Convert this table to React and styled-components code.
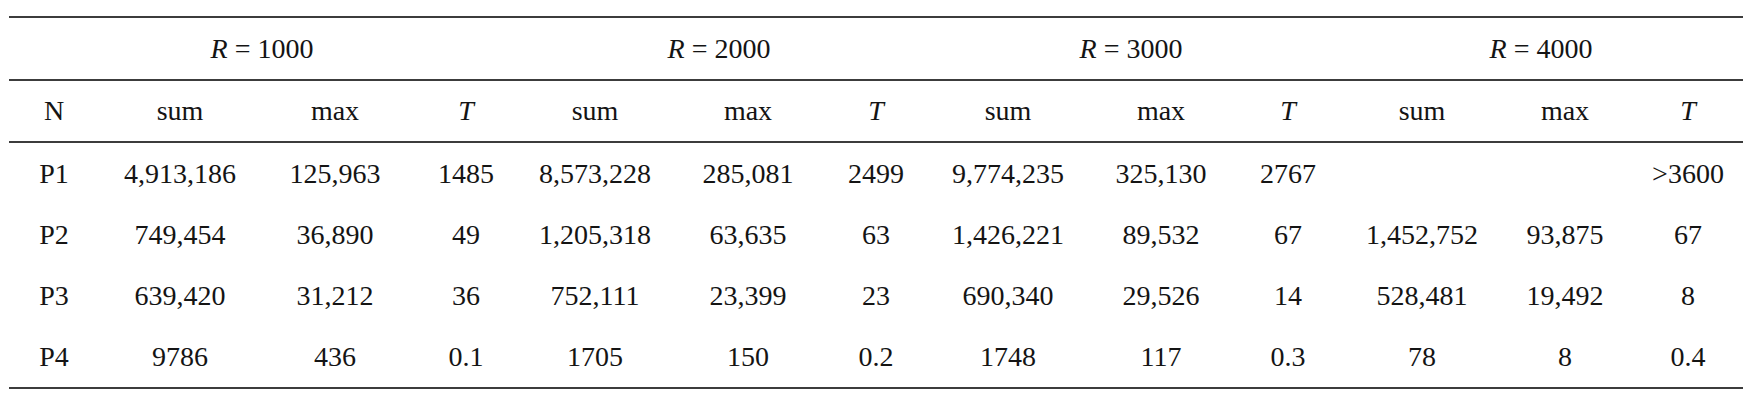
import React from "react";
import styled, { createGlobalStyle } from "styled-components";

const Global = createGlobalStyle`
  html, body { margin: 0; padding: 0; background: #ffffff; }
  body { font-family: "Liberation Serif", "Times New Roman", serif; color: #141414; }
`;

const COLS = "90px 162px 148px 114px 144px 162px 94px 170px 136px 118px 150px 136px 110px";

const Page = styled.div`
  padding: 16px 0 0 9px;
  width: 1734px;
`;

const Table = styled.div`
  border-top: 2px solid #3c3c3c;
  border-bottom: 2px solid #3c3c3c;
`;

const Row = styled.div`
  display: grid;
  grid-template-columns: ${COLS};
  height: ${(p) => p.$h}px;
  align-items: center;
  border-bottom: ${(p) => (p.$rule ? "2px solid #3c3c3c" : "none")};
`;

const Cell = styled.div`
  grid-column: ${(p) => p.$span || "auto"};
  display: flex;
  justify-content: center;
  font-size: 28px;
  line-height: 1;
  white-space: nowrap;
  padding-right: ${(p) => p.$shift || 0}px;
`;

const Var = styled.i`
  font-style: italic;
`;

const groups = [
  { v: "1000", span: "1 / 5" },
  { v: "2000", span: "5 / 8" },
  { v: "3000", span: "8 / 11" },
  { v: "4000", span: "11 / 14" },
];

const heads = ["N", "sum", "max", "T", "sum", "max", "T", "sum", "max", "T", "sum", "max", "T"];

const rows = [
  ["P1", "4,913,186", "125,963", "1485", "8,573,228", "285,081", "2499", "9,774,235", "325,130", "2767", "", "", ">3600"],
  ["P2", "749,454", "36,890", "49", "1,205,318", "63,635", "63", "1,426,221", "89,532", "67", "1,452,752", "93,875", "67"],
  ["P3", "639,420", "31,212", "36", "752,111", "23,399", "23", "690,340", "29,526", "14", "528,481", "19,492", "8"],
  ["P4", "9786", "436", "0.1", "1705", "150", "0.2", "1748", "117", "0.3", "78", "8", "0.4"],
];

export default function App() {
  return (
    <>
      <Global />
      <Page>
        <Table>
          <Row $h={61} $rule>
            {groups.map((g) => (
              <Cell key={g.v} $span={g.span} $shift={8}>
                <span>
                  <Var>R</Var> = {g.v}
                </span>
              </Cell>
            ))}
          </Row>
          <Row $h={60} $rule>
            {heads.map((h, i) => (
              <Cell key={i}>{h === "T" ? <Var>T</Var> : h}</Cell>
            ))}
          </Row>
          {rows.map((r) => (
            <Row key={r[0]} $h={61}>
              {r.map((c, i) => (
                <Cell key={i}>{c}</Cell>
              ))}
            </Row>
          ))}
        </Table>
      </Page>
    </>
  );
}
